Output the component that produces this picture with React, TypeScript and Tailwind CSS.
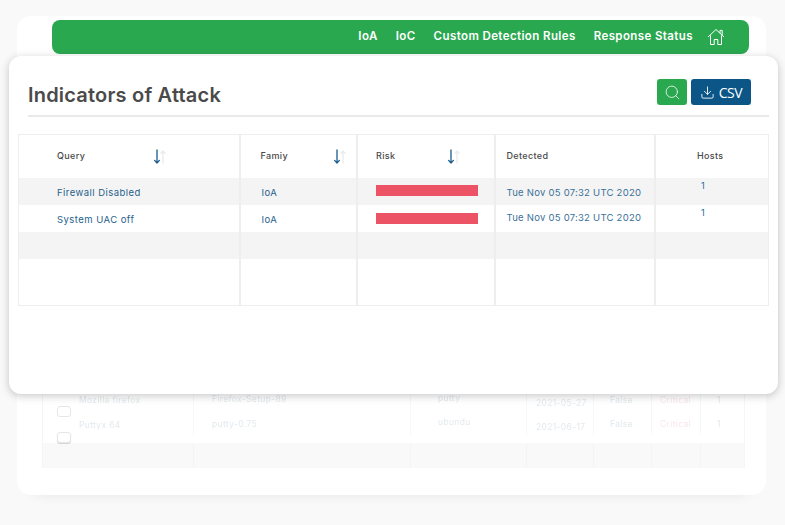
import { Download, Search } from "lucide-react";

const columns = ["w-[221.5px]", "w-[117.5px]", "w-[137.5px]", "w-[160px]", "w-[112.5px]"];

const rows = [
  { query: "Firewall Disabled", family: "IoA", detected: "Tue Nov 05 07:32 UTC 2020", hosts: "1", striped: true },
  { query: "System UAC off", family: "IoA", detected: "Tue Nov 05 07:32 UTC 2020", hosts: "1", striped: false },
];

const backgroundRows = [
  { name: "Mozilla firefox", file: "Firefox-Setup-89", host: "putty", date: "2021-05-27" },
  { name: "Puttyx 64", file: "putty-0.75", host: "ubundu", date: "2021-06-17" },
];

const backColumns = ["w-[151px]", "w-[217px]", "w-[116px]", "w-[67px]", "w-[58px]", "w-[49px]", "w-[43px]"];

function SortArrows() {
  return (
    <svg width="14" height="16" viewBox="0 0 14 16" fill="none" strokeLinecap="round" aria-hidden="true">
      <path d="M4 1v13M1.6 11.4 4 14l2.4-2.6" stroke="#1c5c8c" strokeWidth="1.3" />
      <path d="M10 14V2M7.8 4.4 10 2l2.2 2.4" stroke="#e8eaec" strokeWidth="1.3" />
    </svg>
  );
}

function HomeIcon() {
  return (
    <svg className="-ml-[4px]" width="18" height="18" viewBox="0 0 18 18" fill="none" stroke="#fff" strokeWidth="1" strokeLinejoin="round" aria-hidden="true">
      <path d="M1 9 9 1.5 17 9" />
      <path d="M13 5.2V2.4h2.2v4.9" />
      <path d="M3.5 7.5V16.5h3.7v-5h3.6v5h3.7V7.5" />
    </svg>
  );
}

export default function App() {
  return (
    <div className="relative h-[525px] w-[785px] overflow-hidden bg-[#f9f9f9] font-['Inter',sans-serif]">
      {/* page behind the dialog */}
      <div className="ml-[17px] mt-4 flex h-[479px] w-[749px] flex-col rounded-[14px] bg-white shadow-[0_14px_14px_-18px_rgba(0,0,0,0.14)]">
        <nav className="ml-[35px] mt-1 flex h-[34px] w-[697px] items-center justify-end gap-[18px] rounded-lg bg-[#2aa84f] pb-[1px] pr-[24px] text-[11.5px] font-semibold tracking-[0.4px] text-white">
          <span>IoA</span>
          <span>IoC</span>
          <span>Custom Detection Rules</span>
          <span>Response Status</span>
          <HomeIcon />
        </nav>

        <div className="ml-[25px] mt-[333px] w-[703px] border-x border-[#f4f5f5] text-[8.5px] tracking-[0.35px] text-[#e3e9ec] blur-[0.3px]">
          {backgroundRows.map((row, i) => (
            <div key={row.name} className="flex h-[24px]">
              <div className={`${backColumns[0]} relative border-r border-[#f6f7f7] pl-[36px] ${i === 0 ? "pt-[7px]" : "pt-[8px]"}`}>
                {row.name}
                <span className={`absolute left-[14px] h-[11px] w-[14px] rounded-[3px] border border-[#e6e6e6] bg-white ${i === 0 ? "top-[19px]" : "top-[21px] shadow-[0_1px_1px_rgba(0,0,0,0.15)]"}`} />
              </div>
              <div className={`${backColumns[1]} border-r border-[#f6f7f7] pl-[18px] ${i === 0 ? "pt-[6px]" : "pt-[7px]"}`}>{row.file}</div>
              <div className={`${backColumns[2]} border-r border-[#f6f7f7] pl-[27px] pt-[5px]`}>{row.host}</div>
              <div className={`${backColumns[3]} border-r border-[#f6f7f7] pl-[9px] pt-[10px]`}>{row.date}</div>
              <div className={`${backColumns[4]} border-r border-[#f6f7f7] pl-[16px] pt-[7px]`}>False</div>
              <div className={`${backColumns[5]} border-r border-[#f6f7f7] pl-[8px] pt-[7px] text-[#f9e6e8]`}>Critical</div>
              <div className={`${backColumns[6]} pl-[16px] pt-[7px]`}>1</div>
            </div>
          ))}
          <div className="mt-2 flex h-[25px] bg-[#f9f9f9]">
            {backColumns.map((col) => (
              <div key={col} className={`${col} border-r border-[#f4f4f4] last:border-r-0`} />
            ))}
          </div>
        </div>
      </div>

      {/* dialog */}
      <div className="absolute left-[9px] top-[56px] h-[338px] w-[769px] rounded-xl bg-white shadow-[0_2px_8px_rgba(0,0,0,0.22)]">
        <div className="ml-[19px] mr-[9px] mt-[20px] flex h-[41px] items-start justify-between border-b-2 border-[#e9e9e9]">
          <h1 className="pt-[7px] text-[20px] font-semibold leading-[24px] tracking-[0.2px] text-[#4a4a4a]">Indicators of Attack</h1>
          <div className="mr-[18px] mt-[3px] flex gap-[4px]">
            <button className="flex h-[26px] w-[30px] items-center justify-center rounded-[3px] bg-[#2aa84f] text-white">
              <Search size={17} strokeWidth={1.1} />
            </button>
            <button className="flex h-[26px] w-[60px] items-center justify-center gap-[4px] rounded-[3px] bg-[#0b5587] font-['Open_Sans',sans-serif] text-[14px] font-medium tracking-[-0.4px] text-white">
              <Download size={15} strokeWidth={1.4} />
              CSV
            </button>
          </div>
        </div>

        <div className="ml-[9px] mt-[17px] w-[751px] border border-[#eeeeee] text-[9.5px] tracking-[0.45px]">
          <div className="flex h-[43px] items-center text-[9px] font-medium tracking-[0.35px] text-[#4a4a4a]">
            <div className={`${columns[0]} flex h-full items-center border-r-2 border-[#eeeeee] pl-[38px] pr-[72px]`}>
              <span className="mb-[1px] flex-1">Query</span>
              <SortArrows />
            </div>
            <div className={`${columns[1]} flex h-full items-center border-r-2 border-[#eeeeee] pl-[20px] pr-[9px]`}>
              <span className="mb-[1px] flex-1">Famiy</span>
              <SortArrows />
            </div>
            <div className={`${columns[2]} flex h-full items-center border-r-2 border-[#eeeeee] pl-[18px] pr-[33px]`}>
              <span className="mb-[1px] flex-1">Risk</span>
              <SortArrows />
            </div>
            <div className={`${columns[3]} flex h-full items-center border-r-2 border-[#eeeeee] pb-[1px] pl-[11px]`}>Detected</div>
            <div className={`${columns[4]} flex h-full items-center justify-center pb-[1px] pr-[3px]`}>Hosts</div>
          </div>

          {rows.map((row) => (
            <div key={row.query} className={`flex h-[27px] text-[#25618c] ${row.striped ? "bg-[#f4f4f4]" : "bg-white"}`}>
              <div className={`${columns[0]} flex items-center border-r-2 border-[#eeeeee] pl-[38px] pt-[3px]`}>{row.query}</div>
              <div className={`${columns[1]} flex items-center border-r-2 border-[#eeeeee] pl-[21px] pt-[3px]`}>{row.family}</div>
              <div className={`${columns[2]} border-r-2 border-[#eeeeee] pl-[18px] ${row.striped ? "pt-[7px]" : "pt-[8px]"}`}>
                <div className="h-[11px] w-[102px] bg-[#ec5364]" />
              </div>
              <div className={`${columns[3]} flex items-center border-r-2 border-[#eeeeee] pl-[11px] tracking-[0.25px] text-[#3a7199] ${row.striped ? "pt-[3px]" : "pb-[1px]"}`}>{row.detected}</div>
              <div className={`${columns[4]} pl-[45.5px] text-[9px] leading-[15px] text-[#1c6aa0]`}>{row.hosts}</div>
            </div>
          ))}

          <div className="flex h-[27px] bg-[#f4f4f4]">
            {columns.map((col) => (
              <div key={col} className={`${col} border-r-2 border-[#eeeeee] last:border-r-0`} />
            ))}
          </div>
          <div className="flex h-[46px]">
            {columns.map((col) => (
              <div key={col} className={`${col} border-r-2 border-[#eeeeee] last:border-r-0`} />
            ))}
          </div>
        </div>
      </div>
    </div>
  );
}
